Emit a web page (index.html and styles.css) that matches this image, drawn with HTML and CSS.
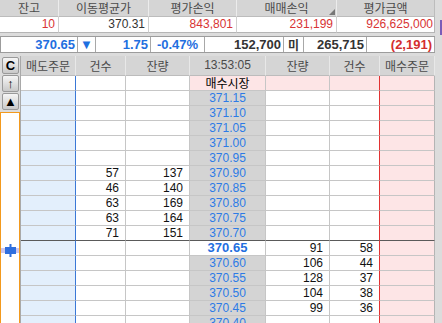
FILE: index.html
```html
<!DOCTYPE html>
<html lang="ko">
<head>
    <meta charset="UTF-8">
    <meta name="viewport" content="width=device-width, initial-scale=1.0">
    <title>호가창</title>
    <link rel="stylesheet" href="styles.css">
</head>
<body>

    <div class="summary">
        <div class="hd">잔고</div>
        <div class="hd">이동평균가</div>
        <div class="hd">평가손익</div>
        <div class="hd sortable">매매손익</div>
        <div class="hd">평가금액</div>
        <div class="val red">10</div>
        <div class="val">370.31</div>
        <div class="val red">843,801</div>
        <div class="val red">231,199</div>
        <div class="val red">926,625,000</div>
    </div>

    <div class="bar">
        <div class="cell blue right">370.65</div>
        <div class="cell blue mid">▼</div>
        <div class="cell blue right">1.75</div>
        <div class="cell blue mid">-0.47%</div>
        <div class="cell right">152,700</div>
        <div class="cell mid kr">미</div>
        <div class="cell right">265,715</div>
        <div class="cell red right">(2,191)</div>
    </div>

    <div class="book">
        <div class="tools">
            <button class="tool">C</button>
            <button class="tool">↑</button>
            <button class="tool">▲</button>
            <div class="track">
                <svg class="marker" width="18" height="13" viewBox="0 0 18 13">
                    <rect x="0" y="4" width="18" height="5" fill="#cdc6ef"/>
                    <rect x="4" y="3" width="11" height="7" fill="#2f6fdf"/>
                    <rect x="8.5" y="0" width="2" height="13" fill="#2f6fdf"/>
                </svg>
            </div>
        </div>

        <div class="grid">
            <div class="th">매도주문</div>
            <div class="th">건수</div>
            <div class="th">잔량</div>
            <div class="th">13:53:05</div>
            <div class="th">잔량</div>
            <div class="th">건수</div>
            <div class="th">매수주문</div>

            <div class="row market">
                <div class="c sell plain"></div><div class="c"></div><div class="c"></div>
                <div class="c price kr">매수시장</div><div class="c"></div><div class="c"></div><div class="c buy"></div>
            </div>
            <div class="row">
                <div class="c sell"></div><div class="c"></div><div class="c"></div>
                <div class="c price">371.15</div><div class="c"></div><div class="c"></div><div class="c buy"></div>
            </div>
            <div class="row">
                <div class="c sell"></div><div class="c"></div><div class="c"></div>
                <div class="c price">371.10</div><div class="c"></div><div class="c"></div><div class="c buy"></div>
            </div>
            <div class="row">
                <div class="c sell"></div><div class="c"></div><div class="c"></div>
                <div class="c price">371.05</div><div class="c"></div><div class="c"></div><div class="c buy"></div>
            </div>
            <div class="row">
                <div class="c sell"></div><div class="c"></div><div class="c"></div>
                <div class="c price">371.00</div><div class="c"></div><div class="c"></div><div class="c buy"></div>
            </div>
            <div class="row">
                <div class="c sell"></div><div class="c"></div><div class="c"></div>
                <div class="c price">370.95</div><div class="c"></div><div class="c"></div><div class="c buy"></div>
            </div>
            <div class="row">
                <div class="c sell"></div><div class="c">57</div><div class="c">137</div>
                <div class="c price">370.90</div><div class="c"></div><div class="c"></div><div class="c buy"></div>
            </div>
            <div class="row">
                <div class="c sell"></div><div class="c">46</div><div class="c">140</div>
                <div class="c price">370.85</div><div class="c"></div><div class="c"></div><div class="c buy"></div>
            </div>
            <div class="row">
                <div class="c sell"></div><div class="c">63</div><div class="c">169</div>
                <div class="c price">370.80</div><div class="c"></div><div class="c"></div><div class="c buy"></div>
            </div>
            <div class="row">
                <div class="c sell"></div><div class="c">63</div><div class="c">164</div>
                <div class="c price">370.75</div><div class="c"></div><div class="c"></div><div class="c buy"></div>
            </div>
            <div class="row last-ask">
                <div class="c sell"></div><div class="c">71</div><div class="c">151</div>
                <div class="c price">370.70</div><div class="c"></div><div class="c"></div><div class="c buy"></div>
            </div>
            <div class="row">
                <div class="c sell"></div><div class="c"></div><div class="c"></div>
                <div class="c price now">370.65</div><div class="c">91</div><div class="c">58</div><div class="c buy"></div>
            </div>
            <div class="row">
                <div class="c sell"></div><div class="c"></div><div class="c"></div>
                <div class="c price">370.60</div><div class="c">106</div><div class="c">44</div><div class="c buy"></div>
            </div>
            <div class="row">
                <div class="c sell"></div><div class="c"></div><div class="c"></div>
                <div class="c price">370.55</div><div class="c">128</div><div class="c">37</div><div class="c buy"></div>
            </div>
            <div class="row">
                <div class="c sell"></div><div class="c"></div><div class="c"></div>
                <div class="c price">370.50</div><div class="c">104</div><div class="c">38</div><div class="c buy"></div>
            </div>
            <div class="row">
                <div class="c sell"></div><div class="c"></div><div class="c"></div>
                <div class="c price">370.45</div><div class="c">99</div><div class="c">36</div><div class="c buy"></div>
            </div>
            <div class="row">
                <div class="c sell"></div><div class="c"></div><div class="c"></div>
                <div class="c price">370.40</div><div class="c"></div><div class="c"></div><div class="c buy"></div>
            </div>
        </div>
    </div>

    <div class="edge"></div>

</body>
</html>
```

FILE: styles.css
```css
*{
    margin: 0;
    padding: 0;
    box-sizing: border-box;
}
body{
    width: 442px;
    height: 323px;
    overflow: hidden;
    position: relative;
    background-color: #dcdcdc;
    font-family: "Liberation Sans", "Noto Sans CJK KR", sans-serif;
    font-size: 12px;
    color: #333;
}
.kr{
    font-family: "Noto Sans CJK KR", sans-serif;
}

/* top summary */
.summary{
    display: grid;
    grid-template-columns: 59px 90px 88px 100px 98px;
    width: 435px;
}
.hd{
    height: 17px;
    line-height: 16px;
    text-align: center;
    background-color: #d5d5d5;
    color: #4a4a4a;
    border-right: 1px solid #ececec;
    border-bottom: 1px solid #bcbcbc;
    font-family: "Noto Sans CJK KR", sans-serif;
}
.hd:nth-child(5){
    border-right-color: #bcbcbc;
}
.sortable{
    position: relative;
}
.sortable::after{
    content: "";
    position: absolute;
    right: 1px;
    bottom: 1px;
    border-left: 6px solid transparent;
    border-bottom: 6px solid #777;
}
.val{
    height: 16px;
    line-height: 15px;
    text-align: right;
    padding-right: 3px;
    background-color: #fff;
    border-right: 1px solid #cfcfcf;
    border-bottom: 1px solid #b5b5b5;
}
.val:last-child{
    padding-right: 1px;
    border-right-color: #b5b5b5;
}
.red{
    color: #d83434;
}

/* price bar */
.bar{
    display: grid;
    grid-template-columns: 77px 18px 55px 54px 79px 20px 63px 68px;
    width: 435px;
    margin-top: 3px;
    background-color: #fff;
    border: 1px solid #9c9c9c;
    border-right: none;
}
.cell{
    height: 15px;
    line-height: 15px;
    font-size: 13px;
    font-weight: bold;
    border-right: 1px solid #a8a8a8;
    white-space: nowrap;
    overflow: hidden;
}
.cell.right{
    text-align: right;
    padding-right: 2px;
}
.cell.mid{
    text-align: center;
}
.cell.blue{
    color: #1f6fe0;
}
.cell.red{
    color: #d42e2e;
}
.cell.kr{
    font-size: 12px;
}

/* order book */
.book{
    display: flex;
    margin-top: 3px;
}
.tools{
    width: 20px;
    display: flex;
    flex-direction: column;
    padding-top: 1px;
}
.tool{
    width: 17px;
    height: 17px;
    margin-left: 2px;
    margin-bottom: 1px;
    border: 1px solid #9a9a9a;
    border-radius: 2px;
    background: linear-gradient(#f6f6f6, #c9c9c9);
    font-family: "Liberation Sans", sans-serif;
    font-size: 13px;
    font-weight: bold;
    line-height: 14px;
    color: #000;
}
.track{
    flex: 1;
    height: 220px;
    margin-top: 1px;
    background-color: #fff;
    border: 1px solid #f39a1e;
}
.marker{
    display: block;
    margin-top: 131px;
}
.grid{
    width: 415px;
    display: grid;
    grid-template-columns: 55px 50px 64px 76px 64px 50px 55px;
    border-left: 1px solid #a9a9a9;
}
.th{
    height: 20px;
    line-height: 19px;
    text-align: center;
    background-color: #d5d5d5;
    color: #4a4a4a;
    border-right: 1px solid #e8e8e8;
    border-bottom: 1px solid #bcbcbc;
    font-family: "Noto Sans CJK KR", sans-serif;
}
.th:nth-child(4){
    font-family: "Liberation Sans", sans-serif;
}
.row{
    display: contents;
}
.c{
    height: 15px;
    line-height: 14px;
    text-align: right;
    padding-right: 6px;
    color: #111;
    background-color: #fff;
    border-right: 1px solid #c6c6c6;
    border-bottom: 1px solid #c6c6c6;
}
.c.sell{
    background-color: #e3effc;
    border-right-color: #3a78d6;
}
.c.sell.plain{
    background-color: #fff;
}
.row > .c:nth-child(6){
    border-right-color: #e23232;
}
.c.buy{
    background-color: #fde5e6;
    border-right-color: #b4b4b4;
}
.c.price{
    text-align: center;
    padding-right: 0;
    color: #2d7be6;
    background-color: #d4d4d4;
}
.c.price.now{
    background-color: #fff;
    font-size: 13px;
    font-weight: bold;
    color: #1f6fe0;
}
.market > .c:nth-child(n+4){
    background-color: #fde5e6;
}
.market > .c.price{
    color: #000;
}
.last-ask > .c{
    border-bottom-color: #5a5a5a;
}

.edge{
    position: absolute;
    right: 0;
    top: 20px;
    width: 2px;
    height: 15px;
    background-color: #7a5cb8;
}
```
